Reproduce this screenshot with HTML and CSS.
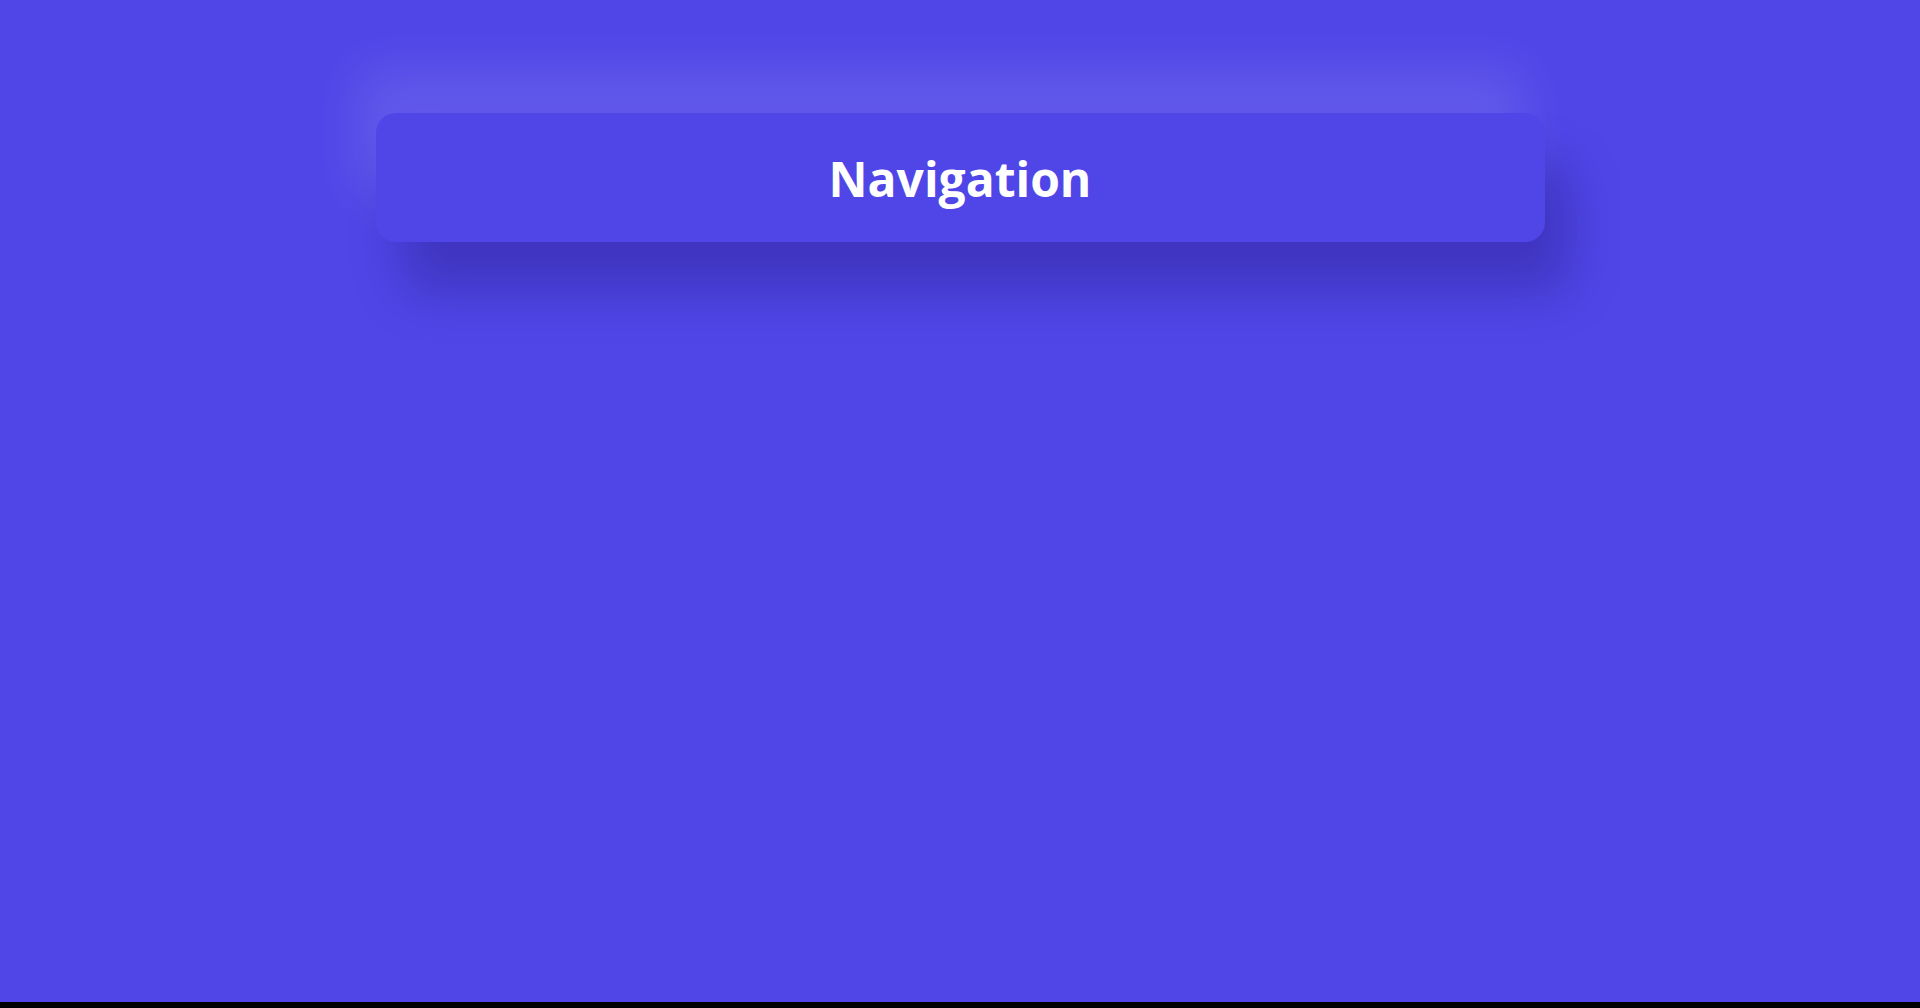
FILE: index.html
```html
<!DOCTYPE html>
<html lang="en">
<head>
<meta charset="utf-8">
<title>Navigation</title>
<link rel="stylesheet" href="styles.css">
</head>
<body>
<main class="page">
  <nav class="nav-card">
    <h1 class="nav-title">Navigation</h1>
  </nav>
</main>
</body>
</html>
```
FILE: styles.css
```css
html {
  background: #000;
}
body {
  margin: 0;
  font-family: "Open Sans", "Noto Sans", sans-serif;
}
.page {
  height: 1002px;
  background: #5046e8;
  padding-top: 113px;
  box-sizing: border-box;
}
.nav-card {
  width: 1169px;
  margin: 0 auto;
  padding: 33px 0 31px;
  border-radius: 20px;
  background: #5046e8;
  box-shadow: 25px 50px 50px rgba(20, 10, 90, 0.28), -20px -45px 50px rgba(255, 255, 255, 0.1);
  text-align: center;
}
.nav-title {
  margin: 0;
  font-size: 48px;
  font-weight: 700;
  line-height: 65px;
  color: #fff;
}
```
